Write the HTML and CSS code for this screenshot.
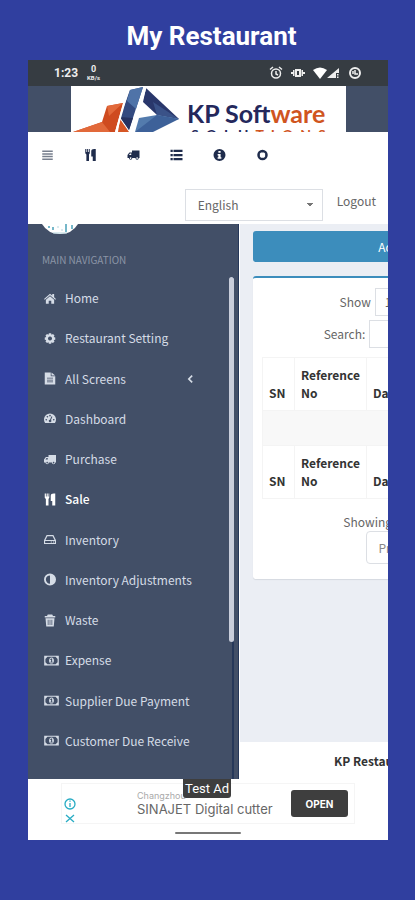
FILE: index.html
```html
<!DOCTYPE html>
<html lang="en">
<head>
    <meta charset="UTF-8">
    <meta name="viewport" content="width=device-width, initial-scale=1.0">
    <title>My Restaurant</title>
    <link rel="stylesheet" href="styles.css">
</head>
<body>
    <svg class="sprite" aria-hidden="true">
        <symbol id="bars" viewBox="0 0 16 16"><path d="M1 2h14v2H1zM1 5.500h14v2H1zM1 9h14v2H1zM1 12.500h14v2H1z"/></symbol>
        <symbol id="cutlery" viewBox="0 0 16 16"><path d="M1 0h1.500v4h1V0h1.500v4h1V0H7v5.500L6 7.200V16H2.500V7.200L1 5.500zM9 3q0-3 4-3h2v16h-4v-6H9z"/></symbol>
        <symbol id="truck" viewBox="0 0 16 16"><path fill-rule="evenodd" d="M6 2h10v10h-1a2.200 2.200 0 0 1-4.400 0H6.400a2.200 2.200 0 0 1-4.400 0H0V8l2.500-3.500H6zM2 8h3V6H3.300zM4.200 11a1 1 0 1 0 .01 0zM12.800 11a1 1 0 1 0 .01 0z"/></symbol>
        <symbol id="list" viewBox="0 0 16 16"><path d="M0 1h3v3H0zM4 1h12v3H4zM0 6.500h3v3H0zM4 6.500h12v3H4zM0 12h3v3H0zM4 12h12v3H4z"/></symbol>
        <symbol id="info" viewBox="0 0 16 16"><path fill-rule="evenodd" d="M8 0a8 8 0 1 1 0 16A8 8 0 0 1 8 0zM6.500 2.500v2.500h3V2.500zM5.500 6.500v2h1V11h-1v2h5v-2h-1V6.500z"/></symbol>
        <symbol id="ring" viewBox="0 0 16 16"><path fill-rule="evenodd" d="M8 1a7 7 0 1 1 0 14A7 7 0 0 1 8 1zM6 4.500L4.500 6v4L6 11.500h4l1.500-1.500V6L10 4.500z"/></symbol>
        <symbol id="home" viewBox="0 0 16 16"><path d="M8 1.500l3 2.600V2h2.500v4.300L16 8.500l-1 1.100-7-6-7 6-1-1.100zM8 5l5.500 4.700V15H9.700v-4H6.300v4H2.500V9.700z"/></symbol>
        <symbol id="gear" viewBox="0 0 16 16"><path fill-rule="evenodd" d="M6.500 1h3l.5 2 2-1 2 2-1 2 2 .5v3l-2 .5 1 2-2 2-2-1-.5 2h-3L6 13l-2 1-2-2 1-2-2-.5v-3L3 6 2 4l2-2 2 1zM8 5.300a2.700 2.700 0 1 0 .01 0z"/></symbol>
        <symbol id="file" viewBox="0 0 16 16"><path fill-rule="evenodd" d="M1 0h8v5h6v11H1zM10 0l5 4h-5zM4 7v1h8V7zM4 9.500v1h8v-1zM4 12v1h8v-1z"/></symbol>
        <symbol id="dash" viewBox="0 0 16 16"><path fill-rule="evenodd" d="M1.500 14A8 8 0 1 1 14.500 14zM3 8.500a1 1 0 1 0 .01 0zM4.500 4.500a1 1 0 1 0 .01 0zM8 3a1 1 0 1 0 .01 0zM13 8.500a1 1 0 1 0 .01 0zM10 5L8 9.500a1.700 1.700 0 1 0 1.300.5L11.200 5.500z"/></symbol>
        <symbol id="hdd" viewBox="0 0 16 16"><path fill-rule="evenodd" d="M3.500 2h9L16 9v5H0V9zM4.500 3.500L2 8.500h12l-2.500-5zM1.500 10v2.500h13V10zM9 10.500h1.500V12H9zM12 10.500h1.500V12H12z"/></symbol>
        <symbol id="adjust" viewBox="0 0 16 16"><path fill-rule="evenodd" d="M8 0a8 8 0 1 1 0 16A8 8 0 0 1 8 0zM8 2.500a5.500 5.500 0 0 0 0 11z"/></symbol>
        <symbol id="trash" viewBox="0 0 16 16"><path fill-rule="evenodd" d="M5 0h6l1 2h3v2H1V2h3zM2 5h12l-1 11H3zM5 7v7h1V7zM7.500 7v7h1V7zM10 7v7h1V7z"/></symbol>
        <symbol id="money" viewBox="0 0 18 16"><path fill-rule="evenodd" d="M0 2h18v12H0zM4 3.500L1.500 6v4L4 12.500h10l2.500-2.500V6L14 3.500zM9 4.200c4 0 4 7.600 0 7.600s-4-7.600 0-7.600zM8.500 5.500L7.500 6.500v1h1v2h-1v1h3v-1h-.7v-4z"/></symbol>
    </svg>

    <h1 class="title">My Restaurant</h1>

    <div class="phone">
        <div class="status-bar">
            <span class="clock">1:23</span>
            <span class="speed"><b>0</b><small>KB/s</small></span>
            <div class="status-icons">
                <svg width="14" height="14" viewBox="0 0 14 14" fill="none" stroke="#eee" stroke-width="1.500"><circle cx="7" cy="7.500" r="4.500"/><path d="M1 3.500L4 1M13 3.500L10 1M7 5v3l2 1"/></svg>
                <svg width="14" height="14" viewBox="0 0 14 14" fill="#eee"><path fill-rule="evenodd" d="M4 3h6v8H4zM6 5v4h2V5zM2 4h1.500v6H2zM0 6h2v2H0zM10.500 4H12v6h-1.500zM12 6h2v2h-2z"/></svg>
                <span class="signal">
                    <svg width="14" height="14" viewBox="0 0 14 14" fill="#fff"><path d="M0 4q7-5 14 0L7 13z"/></svg>
                    <svg width="13" height="14" viewBox="0 0 13 14" fill="#eee"><path d="M12 2v5H9v5H0zM10 8h1.500v1.500H10zM10 10.500h1.500V12H10z"/></svg>
                </span>
                <svg width="14" height="14" viewBox="0 0 14 14" fill="none" stroke="#eee" stroke-width="2"><circle cx="7" cy="7" r="5"/><path stroke-width="1.500" d="M7 4v4h3M5 5v3"/></svg>
            </div>
        </div>

        <header class="logo-bar">
            <div class="logo">
                <svg class="logo-mark" width="108" height="46" viewBox="0 0 108 46">
                    <path fill="#cf4b1f" d="M2 46l29-10 5-16 16-3-8 29z"/>
                    <path fill="#e2693a" d="M2 46l29-10 8 10zM36 20l16-3-14 13z"/>
                    <path fill="#334a80" d="M59 4l13-3-14 43-9-13z"/>
                    <path fill="#4f73a8" d="M59 4l13-3-7 22-9-8z"/>
                    <path fill="#263361" d="M49 31l13 1-4 12z"/>
                    <path fill="#d65625" d="M49 33l9 13H47z"/>
                    <path fill="#29376b" d="M75 2l33 31-22-4-14-13z"/>
                    <path fill="#3a5288" d="M82 16l26 17-22-4z"/>
                    <path fill="#537bad" d="M68 32l18-3 22 4-44 13z"/>
                    <path fill="#3d6199" d="M86 29l22 4-26 13H64z"/>
                    <path fill="none" stroke="#fff" stroke-width="2" d="M57 4L45 46M75 0L61 46"/>
                </svg>
                <div class="logo-text">
                    <div class="brand">KP Soft<span>ware</span></div>
                    <div class="sub">SOLU<span>TIONS</span></div>
                </div>
            </div>
        </header>

        <nav class="toolbar">
            <div class="tools">
                <button type="button" class="faded" aria-label="Menu"><svg><use href="#bars"/></svg></button>
                <button type="button" aria-label="Sale"><svg><use href="#cutlery"/></svg></button>
                <button type="button" aria-label="Purchase"><svg><use href="#truck"/></svg></button>
                <button type="button" aria-label="List"><svg><use href="#list"/></svg></button>
                <button type="button" aria-label="Info"><svg><use href="#info"/></svg></button>
                <button type="button" aria-label="Settings"><svg><use href="#ring"/></svg></button>
            </div>
            <div class="account">
                <select class="language" aria-label="Language">
                    <option>English</option>
                </select>
                <a class="logout" href="#">Logout</a>
            </div>
        </nav>

        <div class="main">
            <aside class="sidebar">
                <svg class="avatar" width="36" height="10" viewBox="0 0 36 10">
                    <path fill="#fff" d="M0 0h36q-6 10-18 10T0 0z"/>
                    <path stroke="#4aa0b8" stroke-width="1.500" d="M7 2v2M11 3v3M24 0v8M30 1v4"/>
                    <path stroke="#b6d6df" d="M16 2v2M20 5v2M11 9h14"/>
                </svg>
                <h2 class="menu-title">MAIN NAVIGATION</h2>
                <ul class="menu">
                    <li><a href="#"><svg><use href="#home"/></svg>Home</a></li>
                    <li><a href="#"><svg><use href="#gear"/></svg>Restaurant Setting</a></li>
                    <li><a href="#"><svg><use href="#file"/></svg>All Screens<svg class="arrow" viewBox="0 0 8 12"><path d="M6 2L2 6l4 4"/></svg></a></li>
                    <li><a href="#"><svg><use href="#dash"/></svg>Dashboard</a></li>
                    <li><a href="#"><svg><use href="#truck"/></svg>Purchase</a></li>
                    <li class="active"><a href="#"><svg><use href="#cutlery"/></svg>Sale</a></li>
                    <li><a href="#"><svg><use href="#hdd"/></svg>Inventory</a></li>
                    <li><a href="#"><svg><use href="#adjust"/></svg>Inventory Adjustments</a></li>
                    <li><a href="#"><svg><use href="#trash"/></svg>Waste</a></li>
                    <li><a href="#"><svg class="wide"><use href="#money"/></svg>Expense</a></li>
                    <li><a href="#"><svg class="wide"><use href="#money"/></svg>Supplier Due Payment</a></li>
                    <li><a href="#"><svg class="wide"><use href="#money"/></svg>Customer Due Receive</a></li>
                </ul>
                <div class="scroll-track"><div class="scroll-thumb"></div></div>
            </aside>

            <section class="content">
                <div class="page">
                    <button type="button" class="add-btn">Add New Sale</button>
                    <div class="box">
                        <div class="field">
                            <label for="length">Show</label>
                            <select id="length"><option>10</option></select>
                            <span>entries</span>
                        </div>
                        <div class="field search">
                            <label for="search">Search:</label>
                            <input type="search" id="search">
                        </div>
                        <table>
                            <thead>
                                <tr><th class="sn">SN</th><th class="ref">Reference No</th><th>Date</th></tr>
                            </thead>
                            <tbody>
                                <tr><td colspan="3"></td></tr>
                            </tbody>
                            <tfoot>
                                <tr><th>SN</th><th>Reference No</th><th>Date</th></tr>
                            </tfoot>
                        </table>
                        <p class="showing">Showing 0 to 0 of 0 entries</p>
                        <div class="pager">
                            <button type="button">Previous</button><button type="button">Next</button>
                        </div>
                    </div>
                </div>
                <footer>KP Restaurant</footer>
            </section>
        </div>

        <div class="ad">
            <span class="test-ad">Test Ad</span>
            <div class="banner">
                <svg width="12" height="28" viewBox="0 0 12 28" fill="none" stroke="#28acc4" stroke-width="1.300"><circle cx="6" cy="7" r="5"/><path d="M6 6v4M6 3.500v1.200M2 18l8 7M10 18l-8 7"/></svg>
                <div class="ad-text">
                    <div class="advertiser">Changzhou</div>
                    <div class="product">SINAJET Digital cutter</div>
                </div>
                <button type="button" class="open-btn">OPEN</button>
            </div>
            <div class="home-pill"></div>
        </div>
    </div>
</body>
</html>
```
FILE: styles.css
```css
* {
    box-sizing: border-box;
}

body {
    margin: 0;
    padding-bottom: 60px;
    background-color: #303f9f;
    font-family: "Noto Sans CJK SC", "Open Sans", sans-serif;
    font-size: 12px;
    line-height: 18px;
    color: #666;
}

button, select, input {
    font: inherit;
    color: inherit;
}

.sprite {
    display: none;
}

.title {
    margin: 0;
    padding: 12px 0 0 8px;
    height: 60px;
    color: #fff;
    font-family: Roboto, sans-serif;
    font-size: 26px;
    font-weight: bold;
    line-height: 48px;
    text-align: center;
}

.phone {
    margin: 0 27px 0 28px;
    background-color: #fff;
    overflow: hidden;
}

/* status bar */
.status-bar {
    display: flex;
    align-items: center;
    height: 26px;
    padding: 0 26px;
    background-color: #363c42;
    color: #eee;
    font-family: Roboto, sans-serif;
}

.clock {
    font-size: 12px;
    font-weight: bold;
}

.speed {
    display: flex;
    flex-direction: column;
    align-items: center;
    margin-left: 9px;
    font-size: 9px;
    line-height: 9px;
}

.speed small {
    font-size: 6px;
    font-weight: bold;
    line-height: 7px;
}

.status-icons {
    display: flex;
    gap: 8px;
    margin-left: auto;
}

.signal {
    display: flex;
}

/* logo */
.logo-bar {
    height: 46px;
    padding: 0 42px 0 43px;
    background-color: #424f67;
}

.logo {
    display: flex;
    gap: 8px;
    height: 46px;
    background-color: #fff;
    overflow: hidden;
}

.logo-mark {
    flex: none;
}

.logo-text {
    padding-top: 12px;
    color: #24285c;
    font-family: Lato, sans-serif;
    font-weight: bold;
    white-space: nowrap;
}

.brand {
    font-size: 25px;
    line-height: 30px;
}

.sub {
    padding-left: 4px;
    font-size: 14px;
    line-height: 14px;
    letter-spacing: 7px;
}

.logo-text span {
    color: #d0551f;
}

/* toolbar */
.toolbar {
    height: 92px;
    padding: 15px 12px 0;
}

.tools {
    display: flex;
    gap: 28px;
}

.tools button {
    display: flex;
    padding: 0 1px;
    border: 0;
    background: none;
    color: #1f2c4c;
}

.tools .faded {
    color: #777f8d;
}

.tools svg {
    width: 13px;
    height: 16px;
    padding: 2px 0;
    fill: currentColor;
}

.account {
    display: flex;
    justify-content: flex-end;
    gap: 14px;
    margin-top: 26px;
}

.language {
    width: 138px;
    height: 32px;
    padding: 0 12px;
    border: 1px solid #dcdfe4;
    appearance: none;
    background-color: #fff;
    background-image: linear-gradient(to bottom left, #777 50%, transparent 50%), linear-gradient(to bottom right, #777 50%, transparent 50%);
    background-position: right 12px center, right 8px center;
    background-repeat: no-repeat;
    background-size: 4px 4px;
}

.logout {
    padding-top: 3px;
    color: #666;
    text-decoration: none;
}

/* layout under the toolbar */
.main {
    display: flex;
    height: 555px;
}

.sidebar {
    position: relative;
    display: flex;
    flex: none;
    flex-direction: column;
    width: 211px;
    padding: 0 0 18px 14px;
    border-right: 1px solid #26385a;
    background-color: #424f67;
}

.avatar {
    flex: none;
}

.menu-title {
    margin: 17px 0;
    color: #8b95a6;
    font-size: 10px;
    font-weight: normal;
    line-height: 18px;
}

.menu {
    display: flex;
    flex: 1;
    flex-direction: column;
    margin: -8px 0 0;
    padding: 0;
    list-style: none;
}

.menu li {
    display: flex;
    flex: 1;
}

.menu a {
    display: flex;
    flex: 1;
    align-items: center;
    padding: 0 44px 0 2px;
    color: #d5dce6;
    text-decoration: none;
}

.menu svg {
    width: 12px;
    height: 13px;
    margin-right: 9px;
    fill: currentColor;
}

.menu .wide {
    width: 15px;
    margin-right: 6px;
}

.menu .active a {
    color: #fff;
    font-weight: 500;
}

.menu .arrow {
    width: 7px;
    height: 10px;
    margin: 0 0 0 auto;
    fill: none;
    stroke: currentColor;
    stroke-width: 2;
}

.scroll-track {
    position: absolute;
    top: 53px;
    right: 4px;
    bottom: 0;
    width: 5px;
    border-right: 2px solid #26385a;
}

.scroll-thumb {
    width: 5px;
    height: 365px;
    border-radius: 3px;
    background-color: #c9cedb;
}

.content {
    display: flex;
    flex: 1;
    flex-direction: column;
    min-width: 0;
    border-left: 1px solid #fff;
    background-color: #ebeef4;
    overflow: hidden;
}

.page {
    flex: 1;
    width: 340px;
    padding: 7px 0 0 13px;
}

.add-btn {
    width: 100%;
    height: 31px;
    border: 0;
    border-radius: 3px;
    background-color: #3c8dbc;
    color: #fff;
}

.box {
    margin-top: 14px;
    padding: 10px 9px 15px;
    border-top: 2px solid #3c8dbc;
    border-radius: 3px;
    background-color: #fff;
    box-shadow: 0 1px 1px #d5d9e0;
}

.field {
    display: flex;
    align-items: center;
    justify-content: center;
    gap: 4px;
    height: 28px;
}

.field select, .field input {
    height: 28px;
    padding: 0 9px;
    border: 1px solid #dcdfe4;
    background-color: #fff;
    appearance: none;
}

.field select {
    width: 76px;
}

.field input {
    width: 140px;
}

.search {
    margin-top: 4px;
}

table {
    width: 100%;
    margin-top: 9px;
    border-collapse: collapse;
    table-layout: fixed;
}

th, td {
    height: 35px;
    padding: 8px 6px;
    border: 1px solid #f4f4f4;
}

th {
    color: #333;
    text-align: left;
    vertical-align: bottom;
}

td {
    background-color: #f8f8f8;
}

.sn {
    width: 32px;
}

.ref {
    width: 72px;
}

.showing {
    margin: 14px 0 0;
    text-align: center;
}

.pager {
    display: flex;
    justify-content: center;
    padding-left: 24px;
}

.pager button {
    height: 33px;
    padding: 0 12px;
    border: 1px solid #dcdfe4;
    background-color: #fff;
    color: #888;
}

.pager button:first-child {
    border-radius: 4px 0 0 4px;
}

footer {
    height: 37px;
    padding-left: 94px;
    background-color: #fff;
    color: #333;
    font-weight: bold;
    line-height: 37px;
    white-space: nowrap;
}

/* ad */
.ad {
    position: relative;
    height: 61px;
    padding: 4px 33px 0;
    font-family: Inter, sans-serif;
}

.banner {
    display: flex;
    align-items: center;
    height: 41px;
    padding: 0 6px 0 2px;
    border: 1px solid #f5f5f5;
}

.banner svg {
    margin-top: 14px;
}

.ad-text {
    margin-left: 61px;
    white-space: nowrap;
}

.advertiser {
    color: #aaa;
    font-size: 9px;
    line-height: 10px;
}

.product {
    font-size: 13px;
    line-height: 16px;
}

.open-btn {
    width: 57px;
    height: 27px;
    margin-left: auto;
    padding: 0;
    border: 0;
    border-radius: 3px;
    background-color: #3e3e3e;
    color: #fff;
    font-size: 10px;
    font-weight: bold;
}

.test-ad {
    position: absolute;
    top: 0;
    left: 155px;
    padding: 0 2px;
    border-radius: 0 0 3px 3px;
    background-color: #3e3e3e;
    color: #fff;
    font-family: Roboto, sans-serif;
    font-size: 13px;
    line-height: 19px;
}

.home-pill {
    width: 66px;
    height: 2px;
    margin: 8px auto 0;
    border-radius: 1px;
    background-color: #777;
}
```
